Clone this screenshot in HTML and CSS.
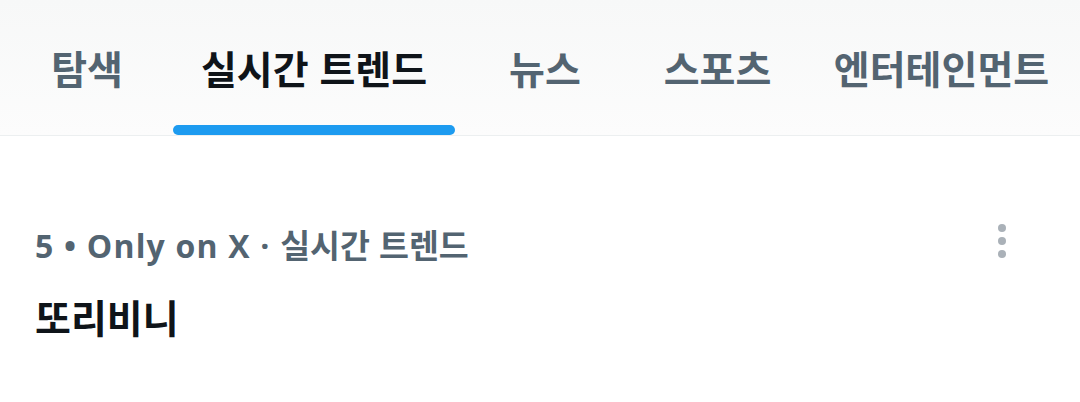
FILE: index.html
```html
<!DOCTYPE html>
<html lang="ko">
<head>
<meta charset="utf-8">
<link rel="stylesheet" href="styles.css">
</head>
<body>
<nav class="tabs">
  <div class="tab t1"><span class="pill"><span class="label">탐색</span></span></div>
  <div class="tab t2 active"><span class="pill"><span class="label">실시간 트렌드</span><span class="indicator"></span></span></div>
  <div class="tab t3"><span class="pill"><span class="label">뉴스</span></span></div>
  <div class="tab t4"><span class="pill"><span class="label">스포츠</span></span></div>
  <div class="tab t5"><span class="pill"><span class="label">엔터테인먼트</span></span></div>
</nav>
<section class="trend">
  <div class="trend-text">
    <div class="meta"><span class="latin">5 • Only on X · </span><span class="ko">실시간 트렌드</span></div>
    <div class="title">또리비니</div>
  </div>
  <div class="more">
    <span class="dot"></span><span class="dot"></span><span class="dot"></span>
  </div>
</section>
</body>
</html>
```
FILE: styles.css
```css
* { box-sizing: border-box; }
html, body { margin: 0; padding: 0; }
body {
  width: 1080px;
  height: 402px;
  background: #ffffff;
  font-family: Roboto, "Noto Sans CJK KR", sans-serif;
  overflow: hidden;
}
.tabs {
  display: flex;
  height: 136px;
  background: linear-gradient(#f7f8f8, #fcfcfc);
  border-bottom: 1px solid #eceff0;
  padding-left: 24px;
}
.tab {
  display: flex;
  justify-content: center;
  height: 135px;
  flex: none;
}
.t1 { width: 126px; }
.t2 { width: 328px; }
.t3 { width: 134px; }
.t4 { width: 211px; }
.t5 { width: 237px; }
.pill {
  position: relative;
  display: flex;
  align-items: center;
  padding: 0 28px;
  height: 100%;
}
.label {
  font-family: "Noto Sans CJK KR", sans-serif;
  font-size: 39px;
  font-weight: 700;
  color: #536471;
  white-space: nowrap;
  margin-top: -2px;
}
.active .label { color: #0f1419; }
.indicator {
  position: absolute;
  left: 0;
  right: 0;
  bottom: 0;
  height: 10px;
  border-radius: 6px;
  background: #1d9bf0;
}
.trend {
  display: flex;
  justify-content: space-between;
  padding: 88px 74px 0 35px;
}
.meta {
  font-weight: 700;
  color: #536471;
  height: 40px;
  line-height: 40px;
  white-space: nowrap;
}
.latin {
  font-family: "Open Sans", Roboto, sans-serif;
  font-size: 32px;
  letter-spacing: 1.2px;
}
.ko {
  font-family: "Noto Sans CJK KR", sans-serif;
  font-size: 32.5px;
}
.title {
  margin-top: 28px;
  font-family: "Noto Sans CJK KR", sans-serif;
  font-size: 39px;
  font-weight: 700;
  color: #0f1419;
  line-height: 48px;
}
.more {
  display: flex;
  flex-direction: column;
  gap: 5px;
}
.dot {
  width: 8px;
  height: 8px;
  border-radius: 50%;
  background: #aab1b8;
}
```
